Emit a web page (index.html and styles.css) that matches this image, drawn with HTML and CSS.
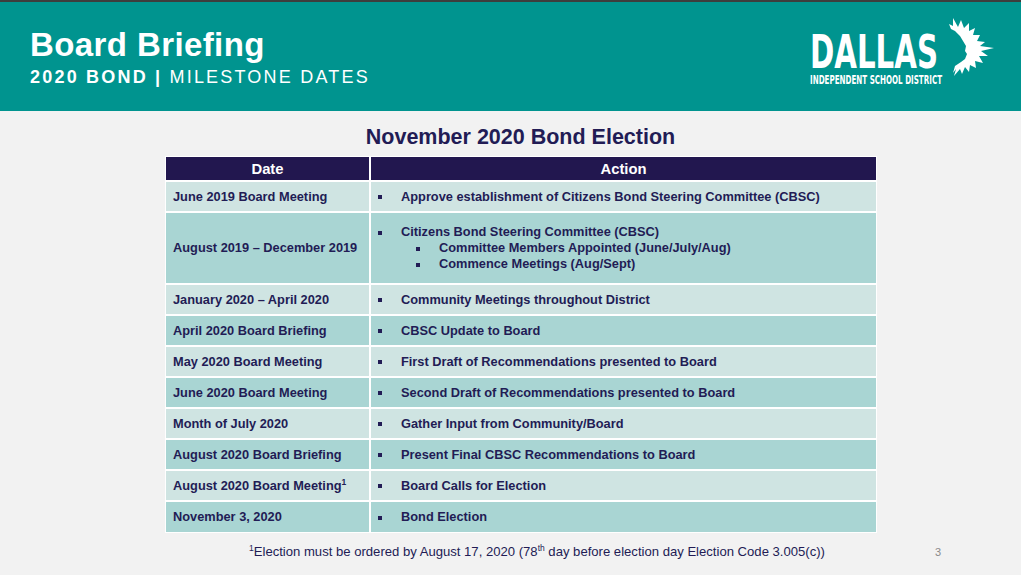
FILE: index.html
```html
<!DOCTYPE html>
<html lang="en">
<head>
<meta charset="utf-8">
<title>Board Briefing – 2020 Bond Milestone Dates</title>
<link rel="stylesheet" href="styles.css">
</head>
<body>
<header class="banner">
  <div class="titles">
    <h1 class="title">Board Briefing</h1>
    <p class="subtitle"><b>2020 BOND |</b> MILESTONE DATES</p>
  </div>
  <svg class="logo" width="185" height="72" viewBox="0 0 185 72" aria-label="Dallas Independent School District">
    <text class="logo-main" x="0" y="53.3" textLength="128" lengthAdjust="spacingAndGlyphs">DALLAS</text>
    <text class="logo-sub" x="0" y="69" textLength="132" lengthAdjust="spacingAndGlyphs">INDEPENDENT SCHOOL DISTRICT</text>
    <g transform="translate(130,0)">
      <polygon fill="#ffffff" points="13,3 18,12 21,5 24,13 29,8 29,16 35,13 33,20 40,20 37,26 45,27 40,31 54,33 41,36 48,41 39,41 43,48 35,46 36,53 30,50 29,57 25,52 22,59 20,54 14,61 16,54 13,58 15,51 21,47 25,44 27,39 25,36 26,31 23,26 20,21 15,16 11,14 9,9 13,11"/>
    </g>
  </svg>
</header>

<main class="content">
  <h2 class="heading">November 2020 Bond Election</h2>
  <div class="grid">
    <div class="th">Date</div>
    <div class="th">Action</div>

    <div class="date light"><span>June 2019 Board Meeting</span></div>
    <div class="action light"><div class="item">Approve establishment of Citizens Bond Steering Committee (CBSC)</div></div>

    <div class="date dark"><span>August 2019 – December 2019</span></div>
    <div class="action dark">
      <div class="item">Citizens Bond Steering Committee (CBSC)</div>
      <div class="item sub">Committee Members Appointed (June/July/Aug)</div>
      <div class="item sub">Commence Meetings (Aug/Sept)</div>
    </div>

    <div class="date light"><span>January 2020 – April 2020</span></div>
    <div class="action light"><div class="item">Community Meetings throughout District</div></div>

    <div class="date dark"><span>April 2020 Board Briefing</span></div>
    <div class="action dark"><div class="item">CBSC Update to Board</div></div>

    <div class="date light"><span>May 2020 Board Meeting</span></div>
    <div class="action light"><div class="item">First Draft of Recommendations presented to Board</div></div>

    <div class="date dark"><span>June 2020 Board Meeting</span></div>
    <div class="action dark"><div class="item">Second Draft of Recommendations presented to Board</div></div>

    <div class="date light"><span>Month of July 2020</span></div>
    <div class="action light"><div class="item">Gather Input from Community/Board</div></div>

    <div class="date dark"><span>August 2020 Board Briefing</span></div>
    <div class="action dark"><div class="item">Present Final CBSC Recommendations to Board</div></div>

    <div class="date light"><span>August 2020 Board Meeting<sup>1</sup></span></div>
    <div class="action light"><div class="item">Board Calls for Election</div></div>

    <div class="date dark"><span>November 3, 2020</span></div>
    <div class="action dark"><div class="item">Bond Election</div></div>
  </div>
  <div class="footer">
    <p class="footnote"><sup>1</sup>Election must be ordered by August 17, 2020 (78<sup>th</sup> day before election day Election Code 3.005(c))</p>
    <span class="pagenum">3</span>
  </div>
</main>
</body>
</html>
```

FILE: styles.css
```css
html, body {
  margin: 0;
  padding: 0;
}
body {
  width: 1021px;
  height: 575px;
  overflow: hidden;
  background: #f2f2f2;
  font-family: "Liberation Sans", Arial, sans-serif;
  color: #221c55;
}

.banner {
  border-top: 2px solid #3d3d3d;
  background: #00948f;
  height: 109px;
  display: flex;
  justify-content: space-between;
  align-items: flex-start;
  padding: 0 26px 0 30px;
  box-sizing: content-box;
  width: calc(1021px - 56px);
}
.titles {
  padding-top: 25px;
  color: #ffffff;
}
.title {
  margin: 0;
  font-size: 33px;
  line-height: 36px;
  font-weight: bold;
  letter-spacing: 0.4px;
}
.subtitle {
  margin: 3px 0 0 0;
  font-size: 18px;
  line-height: 22px;
  letter-spacing: 2.2px;
  font-weight: normal;
}
.subtitle b {
  font-weight: bold;
}
.logo {
  margin-top: 13px;
  display: block;
  overflow: visible;
}
.logo-main {
  font-family: "DejaVu Sans Condensed", "DejaVu Sans", sans-serif;
  font-weight: bold;
  font-size: 45.5px;
  fill: #ffffff;
}
.logo-sub {
  font-family: "DejaVu Sans Condensed", "DejaVu Sans", sans-serif;
  font-weight: bold;
  font-size: 12.3px;
  fill: #ffffff;
}

.content {
  padding-top: 13px;
}
.heading {
  margin: 0;
  text-align: center;
  font-size: 21.5px;
  line-height: 26px;
  font-weight: bold;
  color: #221c55;
  padding-left: 20px;
}

.grid {
  margin: 6px 0 0 165px;
  width: 712px;
  box-sizing: border-box;
  padding: 1px;
  background: #ffffff;
  display: grid;
  grid-template-columns: 203px 1fr;
  grid-template-rows: 23px 29px 70px 29px 29px 29px 29px 29px 29px 29px 30px;
  gap: 2px;
}
.th {
  background: #22174f;
  color: #ffffff;
  font-weight: bold;
  font-size: 14.8px;
  display: flex;
  align-items: center;
  justify-content: center;
}
.light { background: #cfe4e2; }
.dark { background: #a9d5d3; }

.date {
  display: flex;
  align-items: center;
  padding-left: 7px;
  font-size: 12.8px;
  font-weight: bold;
  line-height: 16px;
}
.date sup, .footnote sup {
  font-size: 8.5px;
  line-height: 0;
  vertical-align: 5px;
}
.action {
  display: flex;
  flex-direction: column;
  justify-content: center;
  font-size: 12.8px;
  font-weight: bold;
  line-height: 16px;
}
.item {
  display: flex;
  align-items: center;
}
.item::before {
  content: "";
  flex: none;
  width: 4px;
  height: 4px;
  background: #221c55;
  margin: 1px 19px 0 7px;
}
.item.sub::before {
  margin-left: 45px;
}

.footer {
  display: flex;
  align-items: baseline;
  margin-top: 11px;
  padding-left: 249px;
  padding-right: 80px;
}
.footnote {
  margin: 0;
  font-size: 13.1px;
  line-height: 16px;
  color: #221c55;
}
.pagenum {
  margin-left: auto;
  font-size: 11px;
  color: #8a8a8a;
}
```
